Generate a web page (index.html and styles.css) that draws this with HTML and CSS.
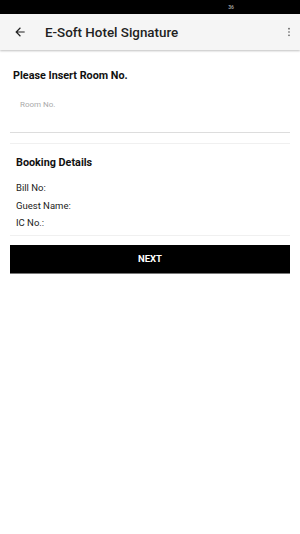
FILE: index.html
```html
<!DOCTYPE html>
<html>
<head>
<meta charset="utf-8">
<link rel="stylesheet" href="styles.css">
</head>
<body>
<div class="status"><span class="status-icon">36</span></div>
<header class="appbar">
  <svg class="back" viewBox="0 0 24 24" width="14" height="14"><path d="M20 11H7.83l5.59-5.59L12 4l-8 8 8 8 1.41-1.41L7.83 13H20v-2z" fill="#222"/></svg>
  <h1 class="title">E-Soft Hotel Signature</h1>
  <svg class="more" viewBox="0 0 4 12" width="4" height="10"><circle cx="2" cy="2" r="1" fill="#555"/><circle cx="2" cy="6" r="1" fill="#555"/><circle cx="2" cy="10" r="1" fill="#555"/></svg>
</header>
<main class="content">
  <h2 class="heading">Please Insert Room No.</h2>
  <div class="field"><span class="placeholder">Room No.</span></div>
  <div class="divider"></div>
  <section class="details">
    <h2 class="heading sub">Booking Details</h2>
    <div class="row">Bill No:</div>
    <div class="row">Guest Name:</div>
    <div class="row">IC No.:</div>
  </section>
  <button class="next">NEXT</button>
</main>
</body>
</html>
```
FILE: styles.css
```css
html, body { margin: 0; padding: 0; background: #fff; }
body { width: 300px; height: 534px; font-family: Roboto, "Liberation Sans", sans-serif; color: #111; }
.status { height: 14px; background: #000; display: flex; justify-content: flex-end; align-items: center; padding-right: 66px; box-sizing: border-box; }
.status-icon { color: #999; font-size: 5px; font-weight: bold; }
.appbar { height: 36px; background: #f5f5f5; display: flex; align-items: center; box-shadow: 0 1px 2px rgba(0,0,0,0.25); position: relative; z-index: 1; padding: 0 9px 0 13px; }
.back { flex: none; }
.title { margin: 0 0 0 18px; font-size: 13.4px; font-weight: 500; color: #222; flex: 1; }
.more { flex: none; }
.content { padding: 0 10px; }
.heading { margin: 0; font-size: 10.8px; font-weight: 700; padding: 19px 3px 0; line-height: 14px; color: #111; }
.field { height: 50px; border-bottom: 1px solid #ddd; display: flex; align-items: flex-start; padding: 17px 0 0 10px; box-sizing: border-box; }
.placeholder { font-size: 8px; color: #aaa; }
.divider { height: 10px; border-bottom: 1px solid #f0f0f0; }
.details { border-bottom: 1px solid #f0f0f0; padding: 0 6px 3px; }
.heading.sub { padding: 12px 0 0; }
.row { font-size: 9.5px; color: #222; line-height: 17.5px; }
.details .heading.sub + .row { margin-top: 9px; }
.next { display: block; width: 100%; height: 29px; margin-top: 9px; background: #000; color: #fff; border: none; border-bottom: 1px solid #777; font-family: Roboto, "Liberation Sans", sans-serif; font-size: 9.5px; font-weight: 700; }
```
